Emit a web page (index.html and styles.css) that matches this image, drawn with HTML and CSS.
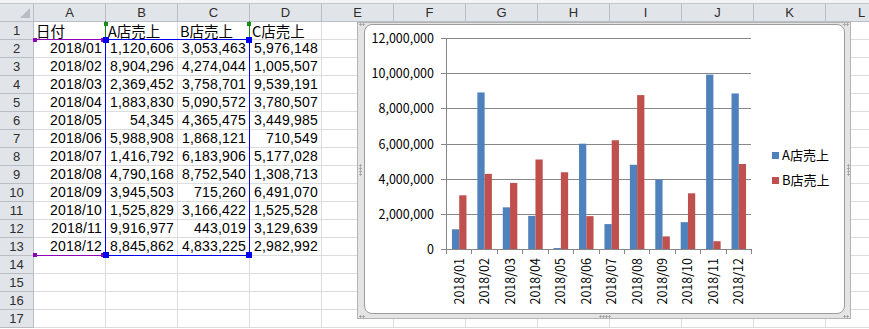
FILE: index.html
```html
<!DOCTYPE html>
<html lang="ja">
    <head>
        <meta charset="UTF-8">
        <title>売上</title>
        <link rel="stylesheet" href="styles.css">
    </head>

    <body>
        <div class="topbar"></div>

        <div class="sheet" id="sheet">
            <div id="grid"></div>

            <!-- chart source ranges -->
            <div class="range range-cat"></div>
            <div class="range range-name"></div>
            <div class="range range-val"></div>
            <div class="handle h-purple" style="left:33px;top:34px"></div>
            <div class="handle h-purple" style="left:101px;top:34px"></div>
            <div class="handle h-purple" style="left:33px;top:249px"></div>
            <div class="handle h-purple" style="left:101px;top:249px"></div>
            <div class="handle h-green" style="left:104px;top:18px"></div>
            <div class="handle h-green" style="left:247px;top:18px"></div>
            <div class="handle h-blue" style="left:103px;top:33px"></div>
            <div class="handle h-blue" style="left:246px;top:33px"></div>
            <div class="handle h-blue" style="left:103px;top:248px"></div>
            <div class="handle h-blue" style="left:246px;top:248px"></div>

            <div class="chart">
                <div class="chartArea">
                    <svg id="chartSvg" width="479" height="288" viewBox="365 25 479 288"></svg>
                </div>
                <span class="grip grip-tl"></span>
                <span class="grip grip-tr"></span>
                <span class="grip grip-bl"></span>
                <span class="grip grip-br"></span>
                <span class="grip grip-ml"></span>
                <span class="grip grip-mr"></span>
                <span class="grip grip-mb"></span>
            </div>
        </div>

        <script>
            const months = ['2018/01', '2018/02', '2018/03', '2018/04', '2018/05', '2018/06',
                            '2018/07', '2018/08', '2018/09', '2018/10', '2018/11', '2018/12'];
            const salesA = [1120606, 8904296, 2369452, 1883830, 54345, 5988908, 1416792, 4790168, 3945503, 1525829, 9916977, 8845862];
            const salesB = [3053463, 4274044, 3758701, 5090572, 4365475, 1868121, 6183906, 8752540, 715260, 3166422, 443019, 4833225];
            const salesC = [5976148, 1005507, 9539191, 3780507, 3449985, 710549, 5177028, 1308713, 6491070, 1525528, 3129639, 2982992];

            const letters = ['A', 'B', 'C', 'D', 'E', 'F', 'G', 'H', 'I', 'J', 'K', 'L'];

            function cell(text, cls) {
                const el = document.createElement('div');
                el.className = 'cell ' + (cls || '');
                el.appendChild(document.createTextNode(text));
                return el;
            }

            function fmt(n) {
                return n.toLocaleString('en-US');
            }

            function buildGrid() {
                const grid = document.getElementById('grid');

                const head = document.createElement('div');
                head.className = 'row';
                head.appendChild(cell('', 'head rowhead corner'));
                letters.forEach(l => head.appendChild(cell(l, 'head')));
                grid.appendChild(head);

                for (let r = 1; r <= 17; r++) {
                    const row = document.createElement('div');
                    row.className = 'row';
                    row.appendChild(cell(String(r), 'head rowhead'));

                    let values = [];
                    if (r === 1) {
                        values = [['日付', 'jp'], ['A店売上', 'jp'], ['B店売上', 'jp'], ['C店売上', 'jp']];
                    } else if (r <= 13) {
                        const i = r - 2;
                        values = [[months[i], 'num'], [fmt(salesA[i]), 'num'], [fmt(salesB[i]), 'num'], [fmt(salesC[i]), 'num']];
                    }

                    letters.forEach((l, c) => {
                        const v = values[c] || [''];
                        row.appendChild(cell(v[0], v[1]));
                    });
                    grid.appendChild(row);
                }
            }

            function buildChart() {
                const svg = document.getElementById('chartSvg');
                const left = 446, right = 751, bottom = 249, top = 38;
                const max = 12000000;
                const catW = (right - left) / 12;
                const barW = catW / 3.5;
                const yOf = v => bottom - v / max * (bottom - top);
                let out = '';

                // gridlines + y labels
                for (let k = 0; k <= 6; k++) {
                    const y = Math.round(yOf(k * 2000000));
                    if (k > 0) {
                        out += `<line class="grid" x1="441" x2="${right}" y1="${y + 0.5}" y2="${y + 0.5}"/>`;
                    }
                    out += `<text class="ylab" x="434" y="${y + 5}">${fmt(k * 2000000)}</text>`;
                }

                // bars
                months.forEach((m, i) => {
                    const x = left + i * catW + barW * 0.75 + 0.5;
                    out += `<rect class="barA" x="${x}" y="${yOf(salesA[i])}" width="${barW}" height="${bottom - yOf(salesA[i])}"/>`;
                    out += `<rect class="barB" x="${x + barW}" y="${yOf(salesB[i])}" width="${barW}" height="${bottom - yOf(salesB[i])}"/>`;
                    const cx = left + (i + 0.5) * catW;
                    out += `<text class="xlab" transform="translate(${cx + 5} 258) rotate(-90)">${m}</text>`;
                });

                // axes and ticks
                out += `<line class="axis" x1="${left + 0.5}" x2="${left + 0.5}" y1="${top}" y2="${bottom + 1}"/>`;
                out += `<line class="axis" x1="441" x2="${right}" y1="${bottom + 0.5}" y2="${bottom + 0.5}"/>`;
                for (let i = 0; i <= 12; i++) {
                    const x = Math.round(left + i * catW) + 0.5;
                    out += `<line class="axis" x1="${x}" x2="${x}" y1="${bottom}" y2="${bottom + 5}"/>`;
                }

                // legend
                out += `<rect class="barA" x="772" y="152" width="7" height="7"/>`;
                out += `<text class="legend" x="782" y="160">A店売上</text>`;
                out += `<rect class="barB" x="772" y="177" width="7" height="7"/>`;
                out += `<text class="legend" x="782" y="185">B店売上</text>`;

                svg.innerHTML = out;
            }

            buildGrid();
            buildChart();
        </script>
    </body>
</html>
```

FILE: styles.css
```css
body {
    margin: 0;
    font-family: "Liberation Sans", "Noto Sans CJK JP", sans-serif;
    background-color: #fff;
    overflow: hidden;
}

.topbar {
    height: 3px;
    background-color: #f3f4f6;
    border-bottom: 1px solid #c4c8ce;
}

.sheet {
    position: relative;
    width: 869px;
    height: 325px;
    overflow: hidden;
}

.row {
    display: flex;
    height: 18px;
}

.cell {
    flex: none;
    width: 72px;
    height: 18px;
    box-sizing: border-box;
    border-right: 1px solid #dadcdf;
    border-bottom: 1px solid #dadcdf;
    padding: 0 3px 0 2px;
    font-size: 14px;
    line-height: 17px;
    color: #000;
    white-space: nowrap;
}

.num {
    text-align: right;
    letter-spacing: 0.2px;
}

.jp {
    font-family: "Noto Sans CJK JP", sans-serif;
    font-size: 14.5px;
    line-height: 18px;
}

.head {
    background-color: #e1e4e9;
    border-color: #b9bec6;
    color: #2e2e2e;
    font-size: 13px;
    line-height: 17px;
    text-align: center;
    padding: 0;
}

.rowhead {
    width: 34px;
}

.corner {
    position: relative;
}

.corner::after {
    content: '';
    position: absolute;
    right: 3px;
    bottom: 3px;
    border-style: solid;
    border-width: 0 0 10px 10px;
    border-color: transparent transparent #b9bdc3 transparent;
}

/* chart source ranges */
.range {
    position: absolute;
    box-sizing: border-box;
}

.range-cat {
    left: 34px;
    top: 35px;
    width: 72px;
    height: 217px;
    border-top: 1px solid #8e00b9;
    border-bottom: 1px solid #8e00b9;
}

.range-name {
    left: 105px;
    top: 17px;
    width: 145px;
    height: 19px;
    border-left: 1px solid #188c18;
    border-right: 1px solid #188c18;
}

.range-val {
    left: 105px;
    top: 35px;
    width: 145px;
    height: 217px;
    border: 1px solid #0000f0;
}

.handle {
    position: absolute;
    width: 4px;
    height: 4px;
}

.h-purple {
    background-color: #8e00b9;
}

.h-green {
    background-color: #188c18;
}

.h-blue {
    width: 6px;
    height: 6px;
    background-color: #0000f0;
}

/* chart */
.chart {
    position: absolute;
    left: 357px;
    top: 18px;
    border: 1px solid #b4b4b4;
    background-color: #e4e4e4;
    padding: 1px 5px 4px 6px;
}

.chartArea {
    width: 479px;
    height: 288px;
    border: 1px solid #9c9c9c;
    border-radius: 8px;
    background-color: #fff;
    overflow: hidden;
}

.chartArea svg {
    display: block;
    font-family: "Noto Sans CJK JP", sans-serif;
}

.grid, .axis {
    stroke: #878787;
    stroke-width: 1;
    shape-rendering: crispEdges;
}

.barA {
    fill: #4f81bd;
}

.barB {
    fill: #c0504d;
}

.ylab {
    font-size: 12.5px;
    text-anchor: end;
    fill: #000;
}

.xlab {
    font-size: 12.5px;
    text-anchor: end;
    fill: #000;
}

.legend {
    font-size: 13px;
    fill: #000;
}

.grip {
    position: absolute;
    background-image: radial-gradient(circle, #a0a0a0 45%, transparent 55%);
    background-size: 3px 3px;
}

.grip-tl { left: 1px; top: 0; width: 6px; height: 3px; }
.grip-tr { right: 1px; top: 0; width: 6px; height: 3px; }
.grip-bl { left: 1px; bottom: 0; width: 6px; height: 3px; }
.grip-br { right: 1px; bottom: 0; width: 6px; height: 3px; }
.grip-ml { left: 1px; top: 141px; width: 3px; height: 12px; }
.grip-mr { right: 0; top: 141px; width: 3px; height: 12px; }
.grip-mb { left: 241px; bottom: 0; width: 12px; height: 3px; }
```
